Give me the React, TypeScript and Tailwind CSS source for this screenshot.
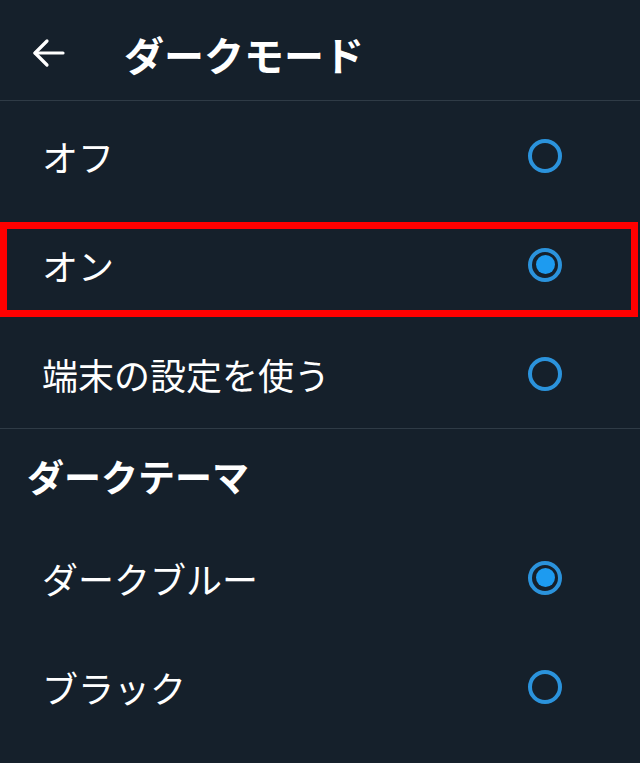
import React from 'react';

const FONT = { fontFamily: '"Noto Sans CJK JP", "Noto Sans", sans-serif' };

function Radio({ checked }: { checked?: boolean }) {
  return (
    <div className="w-[34px] h-[34px] rounded-full border-[4px] border-[#2b93dc] flex items-center justify-center">
      {checked && <div className="w-[19px] h-[19px] rounded-full bg-[#1d9bf0]" />}
    </div>
  );
}

function Row({ label, checked, highlight }: { label: string; checked?: boolean; highlight?: boolean }) {
  return (
    <div className="relative h-[109px] flex items-center justify-between pl-[42px] pr-[78px]">
      <span className="text-[36px] text-white leading-none">{label}</span>
      <Radio checked={checked} />
      {highlight && (
        <div className="absolute left-0 right-[2px] top-[12px] bottom-[2px] border-[7px] border-[#ff0000]" />
      )}
    </div>
  );
}

export default function App() {
  return (
    <div className="w-[640px] h-[763px] bg-[#15202b] overflow-hidden" style={FONT}>
      {/* Header */}
      <div className="h-[101px] flex items-center border-b border-[#2f3b46]">
        <svg width="34" height="30" viewBox="0 0 34 30" className="ml-[32px] mt-[6px]" fill="none" stroke="white" strokeWidth="3.2" strokeLinecap="round" strokeLinejoin="round">
          <path d="M31 15H3" />
          <path d="M15 3L3 15l12 12" />
        </svg>
        <h1 className="ml-[58px] mt-[8px] text-[40px] font-bold text-white leading-none">ダークモード</h1>
      </div>

      <Row label="オフ" />
      <Row label="オン" checked highlight />
      <div className="h-[110px] flex items-center justify-between pl-[42px] pr-[78px] border-b border-[#2f3b46]">
        <span className="text-[36px] text-white leading-none">端末の設定を使う</span>
        <Radio />
      </div>

      {/* Dark theme section */}
      <div className="h-[94px] flex items-center pl-[27px]">
        <h2 className="text-[37px] font-bold text-white leading-none">ダークテーマ</h2>
      </div>
      <Row label="ダークブルー" checked />
      <Row label="ブラック" />
    </div>
  );
}
